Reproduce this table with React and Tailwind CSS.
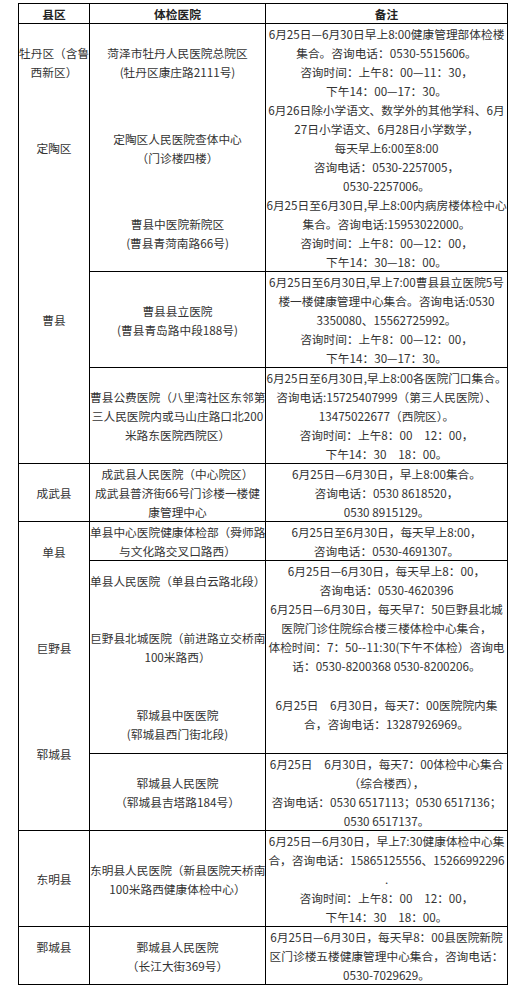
const Lines = ({ items }) => (
  <>
    {items.map((t, i) =>
      t === "" ? (
        <div key={i} className="h-[20px]" />
      ) : (
        <div key={i} className="whitespace-nowrap">
          {t}
        </div>
      )
    )}
  </>
);

const td = "p-0 align-middle text-center border-r border-black";
const tdb = td + " border-b";

const App = () => {
  return (
    <div className="min-h-screen bg-white pt-[3px] font-['Noto_Sans_CJK_SC','Noto_Sans',sans-serif] text-[11.7px] leading-[19px] text-[#333]">
      <table className="ml-[18px] w-[489px] table-fixed border-separate border-spacing-0 border-l border-t border-black">
        <colgroup>
          <col className="w-[71px]" />
          <col className="w-[176px]" />
          <col className="w-[242px]" />
        </colgroup>
        <thead>
          <tr>
            <th className={tdb + " font-bold text-[#222]"}>县区</th>
            <th className={tdb + " font-bold text-[#222]"}>体检医院</th>
            <th className={tdb + " font-bold text-[#222]"}>备注</th>
          </tr>
        </thead>
        <tbody>
          <tr>
            <td className={td}>
              <Lines items={["牡丹区（含鲁", "西新区）"]} />
            </td>
            <td className={td}>
              <Lines items={["菏泽市牡丹人民医院总院区", "(牡丹区康庄路2111号)"]} />
            </td>
            <td className={td}>
              <Lines
                items={[
                  "6月25日—6月30日早上8:00健康管理部体检楼",
                  "集合。咨询电话：0530-5515606。",
                  "咨询时间：上午8：00—11：30，",
                  "下午14：00—17：30。",
                ]}
              />
            </td>
          </tr>
          <tr>
            <td className={td}>定陶区</td>
            <td className={td}>
              <Lines items={["定陶区人民医院查体中心", "（门诊楼四楼）"]} />
            </td>
            <td className={td}>
              <Lines
                items={[
                  "6月26日除小学语文、数学外的其他学科、6月",
                  "27日小学语文、6月28日小学数学，",
                  "每天早上6:00至8:00",
                  "咨询电话：0530-2257005，",
                  "0530-2257006。",
                ]}
              />
            </td>
          </tr>
          <tr>
            <td className={tdb} rowSpan={3}>
              <div>曹县</div>
              <div className="h-[19px]" />
            </td>
            <td className={tdb}>
              <Lines items={["曹县中医院新院区", "(曹县青菏南路66号)"]} />
            </td>
            <td className={tdb}>
              <Lines
                items={[
                  "6月25日至6月30日,早上8:00内病房楼体检中心",
                  "集合。咨询电话:15953022000。",
                  "咨询时间：上午8：00—12：00，",
                  "下午14：30—18：00。",
                ]}
              />
            </td>
          </tr>
          <tr>
            <td className={tdb}>
              <Lines items={["曹县县立医院", "(曹县青岛路中段188号)"]} />
            </td>
            <td className={tdb}>
              <Lines
                items={[
                  "6月25日至6月30日,早上7:00曹县县立医院5号",
                  "楼一楼健康管理中心集合。咨询电话:0530",
                  "3350080、15562725992。",
                  "咨询时间：上午8：00—12：00，",
                  "下午14：30—17：30。",
                ]}
              />
            </td>
          </tr>
          <tr>
            <td className={tdb}>
              <Lines
                items={[
                  "曹县公费医院（八里湾社区东邻第",
                  "三人民医院内或马山庄路口北200",
                  "米路东医院西院区）",
                ]}
              />
            </td>
            <td className={tdb}>
              <Lines
                items={[
                  "6月25日至6月30日,早上8:00各医院门口集合。",
                  "咨询电话:15725407999（第三人民医院）、",
                  "13475022677（西院区）。",
                  "咨询时间：上午8：00　12：00，",
                  "下午14：30　18：00。",
                ]}
              />
            </td>
          </tr>
          <tr>
            <td className={tdb}>成武县</td>
            <td className={tdb}>
              <Lines
                items={[
                  "成武县人民医院（中心院区）",
                  "成武县普济街66号门诊楼一楼健",
                  "康管理中心",
                ]}
              />
            </td>
            <td className={tdb}>
              <Lines
                items={[
                  "6月25日—6月30日，早上8:00集合。",
                  "咨询电话：0530 8618520，",
                  "0530 8915129。",
                ]}
              />
            </td>
          </tr>
          <tr>
            <td className={td} rowSpan={2}>
              <div>单县</div>
              <div className="h-[19px]" />
            </td>
            <td className={tdb}>
              <Lines items={["单县中心医院健康体检部（舜师路", "与文化路交叉口路西）"]} />
            </td>
            <td className={tdb}>
              <Lines
                items={["6月25日至6月30日，每天早上8:00，", "咨询电话：0530-4691307。"]}
              />
            </td>
          </tr>
          <tr>
            <td className={td}>单县人民医院（单县白云路北段）</td>
            <td className={td}>
              <Lines items={["6月25日—6月30日，每天早上8：00，", "咨询电话：0530-4620396"]} />
            </td>
          </tr>
          <tr>
            <td className={td}>巨野县</td>
            <td className={td}>
              <Lines items={["巨野县北城医院（前进路立交桥南", "100米路西）"]} />
            </td>
            <td className={td}>
              <Lines
                items={[
                  "6月25日—6月30日，每天早7：50巨野县北城",
                  "医院门诊住院综合楼三楼体检中心集合，",
                  "体检时间：7：50--11:30(下午不体检）咨询电",
                  "话：0530-8200368  0530-8200206。",
                  "",
                ]}
              />
            </td>
          </tr>
          <tr>
            <td className={tdb} rowSpan={2}>
              <div>郓城县</div>
              <div className="h-[19px]" />
            </td>
            <td className={tdb}>
              <Lines items={["郓城县中医医院", "(郓城县西门街北段)"]} />
            </td>
            <td className={tdb}>
              <Lines
                items={["6月25日　6月30日，每天7：00医院院内集", "合，咨询电话：13287926969。", ""]}
              />
            </td>
          </tr>
          <tr>
            <td className={tdb}>
              <Lines items={["郓城县人民医院", "（郓城县吉塔路184号）"]} />
            </td>
            <td className={tdb}>
              <Lines
                items={[
                  "6月25日　6月30日，每天7：00体检中心集合",
                  "（综合楼西），",
                  "咨询电话：0530 6517113；0530 6517136；",
                  "0530 6517137。",
                ]}
              />
            </td>
          </tr>
          <tr>
            <td className={tdb}>东明县</td>
            <td className={tdb}>
              <Lines items={["东明县人民医院（新县医院天桥南", "100米路西健康体检中心）"]} />
            </td>
            <td className={tdb}>
              <Lines
                items={[
                  "6月25日—6月30日，早上7:30健康体检中心集",
                  "合，咨询电话：15865125556、15266992296",
                  ".",
                  "咨询时间：上午8：00　12：00，",
                  "下午14：30　18：00。",
                ]}
              />
            </td>
          </tr>
          <tr>
            <td className={tdb}>
              <div>鄄城县</div>
              <div className="h-[19px]" />
            </td>
            <td className={tdb}>
              <Lines items={["鄄城县人民医院", "（长江大街369号）"]} />
            </td>
            <td className={tdb}>
              <Lines
                items={[
                  "6月25日—6月30日，每天早8：00县医院新院",
                  "区门诊楼五楼健康管理中心集合，咨询电话：",
                  "0530-7029629。",
                ]}
              />
            </td>
          </tr>
        </tbody>
      </table>
    </div>
  );
};

export default App;
